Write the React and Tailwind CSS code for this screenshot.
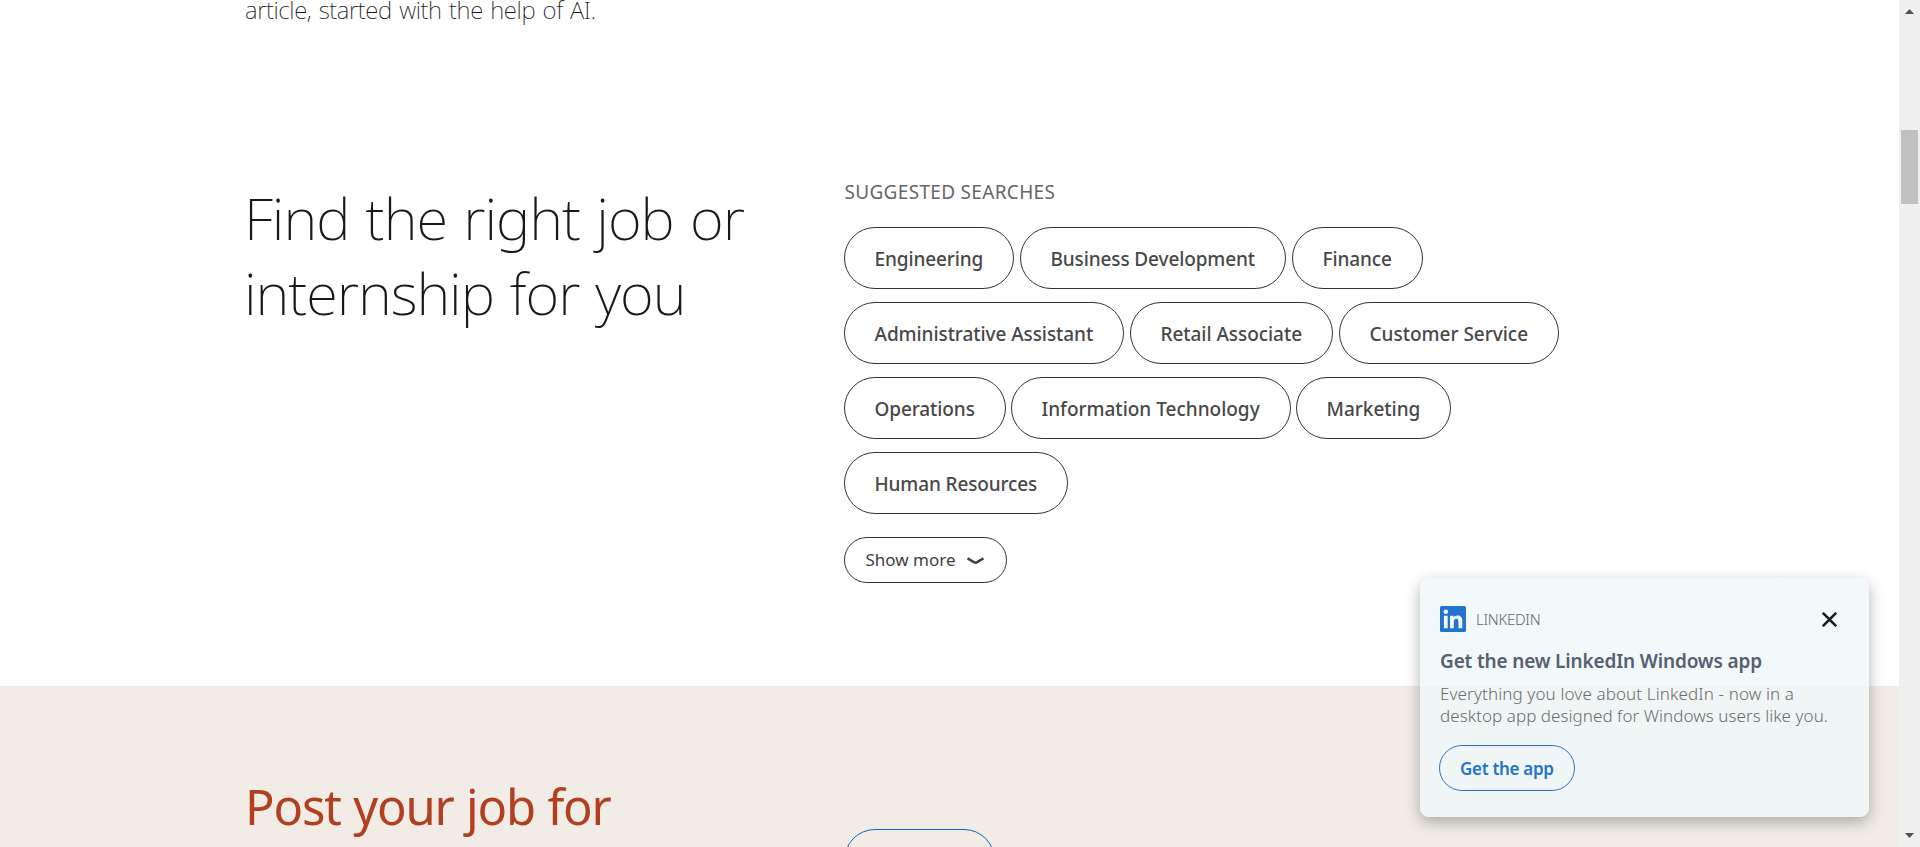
const rows = [
  [
    { label: "Engineering", box: "w-[170px]", text: "tracking-[-0.12px]" },
    { label: "Business Development", box: "w-[266px] ml-[6px]", text: "tracking-[-0.12px]" },
    { label: "Finance", box: "w-[131px] ml-[6px]", text: "tracking-[-0.1px]" },
  ],
  [
    { label: "Administrative Assistant", box: "w-[280px]", text: "tracking-[-0.07px]" },
    { label: "Retail Associate", box: "w-[203px] ml-[6px]", text: "tracking-[-0.05px]" },
    { label: "Customer Service", box: "w-[220px] ml-[6px]", text: "tracking-[-0.01px]" },
  ],
  [
    { label: "Operations", box: "w-[162px]", text: "tracking-[-0.1px]" },
    { label: "Information Technology", box: "w-[280px] ml-[5px]", text: "tracking-[-0.01px]" },
    { label: "Marketing", box: "w-[155px] ml-[5px]", text: "tracking-[-0.02px]" },
  ],
  [{ label: "Human Resources", box: "w-[224px]", text: "tracking-[-0.13px]" }],
];

function Pill({ item }) {
  return (
    <button
      className={`flex h-[62px] shrink-0 items-center rounded-full border border-[#333] pl-[29.5px] pt-[3px] text-[19px] font-medium whitespace-nowrap text-[#484848] ${item.box} ${item.text}`}
    >
      {item.label}
    </button>
  );
}

function LinkedInLogo() {
  return (
    <svg className="h-[26px] w-[26px]" viewBox="0 0 26 26">
      <rect width="26" height="26" rx="1.6" fill="#2374cc" />
      <circle cx="5.8" cy="5.8" r="2.3" fill="#f0f9fc" />
      <path
        fill="#f0f9fc"
        d="M3.9 9.8h3.8v12.4H3.9zM10 9.8h3.6v1.7c.6-1.1 1.9-2 3.9-2 3.8 0 4.8 2.400 4.800 5.900v6.800h-3.800v-6.100c0-1.700-.2-3.300-2.200-3.300s-2.500 1.500-2.500 3.200v6.200H10z"
      />
    </svg>
  );
}

function AppPrompt() {
  return (
    <aside className="absolute top-[578px] left-[1420px] flex h-[239px] w-[449px] flex-col rounded-[9px] bg-[#eefafb]/80 bg-linear-to-b from-[#f1f9fb] from-[45.2%] to-[#f0f6f6] to-[45.2%] px-5 pt-7 shadow-[0_5px_15px_rgba(0,0,0,0.3)]">
      <div className="flex h-[26px] items-center">
        <LinkedInLogo />
        <span className="ml-[10px] text-[15px] leading-[20px] font-light tracking-[-0.3px] whitespace-nowrap text-[#666]">LINKEDIN</span>
        <svg className="mr-[12px] ml-auto h-[15px] w-[15px]" viewBox="0 0 15 15" fill="none" stroke="#191919" strokeWidth="2.5">
          <path d="M.8.8l13.400 13.400M14.200.8L.8 14.200" />
        </svg>
      </div>
      <h3 className="mt-[17px] h-[25px] text-[19px] leading-[25px] font-semibold tracking-[-0.16px] whitespace-nowrap text-[#56606e]">Get the new LinkedIn Windows app</h3>
      <p className="mt-[9px] text-[17px] leading-[22px] font-light whitespace-nowrap text-[#6b6b6b]">
        <span className="block tracking-[0.12px]">Everything you love about LinkedIn - now in a</span>
        <span className="block tracking-[0.05px]">desktop app designed for Windows users like you.</span>
      </p>
      <button className="mt-[18px] -ml-px flex h-[46px] w-[136px] items-center rounded-full border border-[#2374cc] pt-[2px] pl-[20px] text-[17px] font-semibold tracking-[-0.3px] whitespace-nowrap text-[#2374cc]">
        Get the app
      </button>
    </aside>
  );
}

function Scrollbar() {
  return (
    <div className="flex h-full w-[21px] shrink-0 flex-col items-center bg-[#f0f0f0]">
      <svg className="mt-[9px] h-[5px] w-[9px]" viewBox="0 0 9 5">
        <path d="M0 5L4.500 0L9 5z" fill="#505050" />
      </svg>
      <div className="mt-[116px] h-[74px] w-[17px] bg-[#c1c1c1]" />
      <svg className="mt-auto mb-[9px] h-[5px] w-[9px]" viewBox="0 0 9 5">
        <path d="M0 0L4.500 5L9 0z" fill="#505050" />
      </svg>
    </div>
  );
}

export default function App() {
  return (
    <div className="relative flex h-[847px] w-[1920px] overflow-hidden bg-white font-['Noto_Sans','Open_Sans',sans-serif]">
      <main className="flex h-full min-w-0 flex-1 flex-col">
        <section className="h-[686px] shrink-0 pl-[245px]">
          <p className="-mt-[7px] h-[34px] text-[24px] leading-[34px] font-extralight tracking-[-0.37px] [word-spacing:1.5px] whitespace-nowrap text-[#191919]">
            article, started with the help of AI.
          </p>
          <div className="mt-[153px] flex">
            <h2 className="-ml-px w-[600px] shrink-0 text-[58px] leading-[75px] font-extralight whitespace-nowrap text-[#191919]">
              <span className="block tracking-[-0.97px] [word-spacing:2px]">Find the right job or</span>
              <span className="block tracking-[-1.05px] [word-spacing:2px]">internship for you</span>
            </h2>
            <div className="flex flex-col">
              <h3 className="h-[24px] pl-[0.5px] text-[19px] leading-[24px] tracking-[0.32px] whitespace-nowrap text-[#666]">SUGGESTED SEARCHES</h3>
              <div className="mt-[23px] flex flex-col gap-[13px]">
                {rows.map((row, i) => (
                  <div key={i} className="flex">
                    {row.map((item) => (
                      <Pill key={item.label} item={item} />
                    ))}
                  </div>
                ))}
              </div>
              <button className="mt-[23px] flex h-[46px] w-[163px] items-center rounded-full border border-[#333] pl-[20.500px] text-[17px] whitespace-nowrap text-[#404040]">
                <span className="w-[101px] text-left">Show more</span>
                <svg className="mt-[2px] h-[8px] w-[17px]" viewBox="0 0 17 8" fill="none" stroke="#404040" strokeWidth="2.4">
                  <path d="M.5 1.300L6.800 5.100Q8.500 6.300 10.200 5.100L16.500 1.300" />
                </svg>
              </button>
            </div>
          </div>
        </section>
        <section className="flex flex-1 overflow-hidden bg-[#f1ece6] pl-[245px]">
          <h2 className="w-[599px] shrink-0 pt-[89px] text-[49px] leading-[62px] tracking-[-1.2px] [word-spacing:1px] whitespace-nowrap text-[#b24020]">Post your job for</h2>
          <div className="mt-[143px] h-[62px] w-[151px] shrink-0 rounded-full border border-[#0a66c2]" />
        </section>
      </main>
      <Scrollbar />
      <AppPrompt />
    </div>
  );
}
